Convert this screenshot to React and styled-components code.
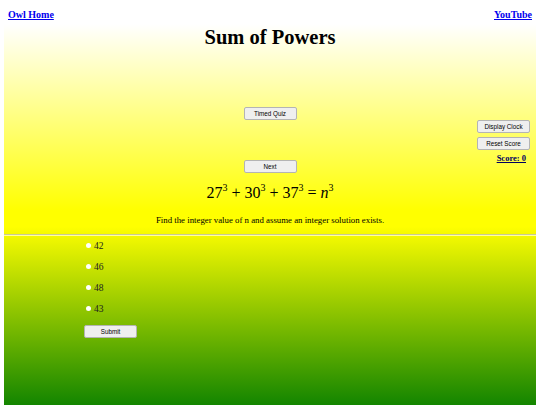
import React from "react";
import styled, { createGlobalStyle } from "styled-components";

const GlobalStyle = createGlobalStyle`
  html, body {
    margin: 0;
    padding: 0;
    background: #ffffff;
  }
  body {
    font-family: "Liberation Serif", "Times New Roman", serif;
  }
`;

const Page = styled.div`
  padding: 0 4px;
  height: 405px;
  box-sizing: border-box;
  overflow: hidden;
`;

const Backdrop = styled.div`
  height: 405px;
  background: linear-gradient(
    to bottom,
    #ffffff 0%,
    #ffffff 6%,
    #ffff00 52%,
    #ffff00 56%,
    #138500 100%
  );
`;

const TopLinks = styled.div`
  display: flex;
  justify-content: space-between;
  padding: 9px 4px 0 4px;
`;

const NavLink = styled.a`
  font-size: 10px;
  font-weight: bold;
  color: #0000ee;
  text-decoration: underline;
`;

const Title = styled.h1`
  margin: 5px 0 0 0;
  text-align: center;
  font-size: 20.5px;
  font-weight: bold;
  line-height: 24px;
`;

const Controls = styled.div`
  display: grid;
  grid-template-columns: 1fr auto 1fr;
  margin-top: 58px;
`;

const CenterStack = styled.div`
  grid-column: 2;
  display: flex;
  flex-direction: column;
  gap: 40px;
`;

const SideStack = styled.div`
  grid-column: 3;
  justify-self: end;
  display: flex;
  flex-direction: column;
  align-items: flex-end;
  gap: 4px;
  padding: 13px 6px 0 0;
`;

const Button = styled.button`
  width: 53px;
  height: 13px;
  padding: 0;
  background: #efefef;
  border: 1px solid #b4b4b4;
  border-radius: 2px;
  font-family: "Liberation Sans", Arial, sans-serif;
  font-size: 6.3px;
  color: #000;
  cursor: pointer;
`;

const Score = styled.a`
  margin-top: -1px;
  margin-right: 4px;
  font-size: 8.5px;
  font-weight: bold;
  color: #000060;
  text-decoration: underline;
`;

const Equation = styled.div`
  margin-top: 8px;
  text-align: center;
  font-size: 16px;
  line-height: 24px;
`;

const Sup = styled.sup`
  font-size: 10px;
  vertical-align: 7px;
  line-height: 0;
`;

const Op = styled.span`
  margin: 0 4px;
`;

const Var = styled.i`
  font-style: italic;
`;

const Prompt = styled.p`
  margin: 10px 0 0 0;
  text-align: center;
  font-size: 8.8px;
`;

const Rule = styled.hr`
  margin: 9px 0 0 0;
  border: none;
  border-top: 1px solid #c8c89a;
  border-bottom: 1px solid #ffffa0;
`;

const Answers = styled.form`
  margin-top: -1px;
  padding-left: 80px;
  display: flex;
  flex-direction: column;
  align-items: flex-start;
`;

const Option = styled.label`
  display: flex;
  align-items: center;
  gap: 3px;
  height: 21px;
  font-size: 9.5px;
  color: #222;
`;

const Dot = styled.span`
  width: 5px;
  height: 5px;
  border-radius: 50%;
  background: #ffffff;
  margin-left: 2px;
`;

const SubmitRow = styled.div`
  display: flex;
  margin-top: 6px;
`;

const options = ["42", "46", "48", "43"];

export default function App() {
  return (
    <>
      <GlobalStyle />
      <Page>
        <Backdrop>
          <TopLinks>
            <NavLink href="#">Owl Home</NavLink>
            <NavLink href="#">YouTube</NavLink>
          </TopLinks>
          <Title>Sum of Powers</Title>
          <Controls>
            <CenterStack>
              <Button>Timed Quiz</Button>
              <Button>Next</Button>
            </CenterStack>
            <SideStack>
              <Button>Display Clock</Button>
              <Button>Reset Score</Button>
              <Score href="#">Score: 0</Score>
            </SideStack>
          </Controls>
          <Equation>
            27<Sup>3</Sup>
            <Op>+</Op>30<Sup>3</Sup>
            <Op>+</Op>37<Sup>3</Sup>
            <Op>=</Op>
            <Var>n</Var>
            <Sup>3</Sup>
          </Equation>
          <Prompt>Find the integer value of n and assume an integer solution exists.</Prompt>
          <Rule />
          <Answers>
            {options.map((o) => (
              <Option key={o}>
                <Dot />
                {o}
              </Option>
            ))}
            <SubmitRow>
              <Button type="button">Submit</Button>
            </SubmitRow>
          </Answers>
        </Backdrop>
      </Page>
    </>
  );
}
